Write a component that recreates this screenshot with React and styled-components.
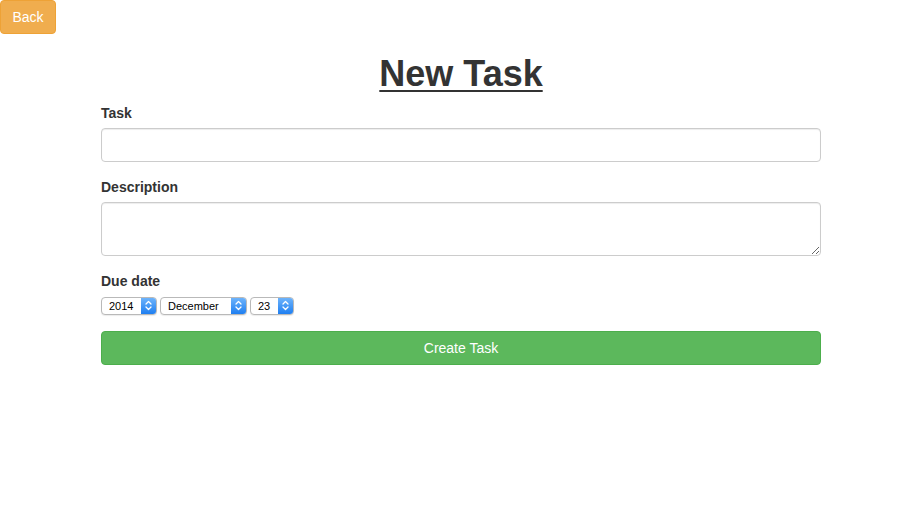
import React from 'react';
import styled, { createGlobalStyle } from 'styled-components';

const GlobalStyle = createGlobalStyle`
  body {
    margin: 0;
    background: #fff;
    font-family: "Liberation Sans", Arial, sans-serif;
    font-size: 14px;
    line-height: 1.42857;
    color: #333;
  }
  * { box-sizing: border-box; }
`;

const BackButton = styled.button`
  display: block;
  width: 56px;
  height: 34px;
  padding: 0;
  background-color: #f0ad4e;
  border: 1px solid #eea236;
  border-radius: 4px;
  color: #fff;
  font-family: inherit;
  font-size: 14px;
  cursor: pointer;
`;

const Page = styled.div`
  display: flex;
  justify-content: center;
  padding-left: 6px;
`;

const Container = styled.div`
  width: 720px;
`;

const Title = styled.h1`
  margin: 20px 0 9px;
  font-size: 36px;
  font-weight: bold;
  line-height: 1.1;
  text-align: center;
  text-decoration: underline;
  text-decoration-thickness: 2px;
  text-underline-offset: 4px;
  color: #333;
`;

const FormGroup = styled.div`
  margin-bottom: 15px;
`;

const Label = styled.label`
  display: block;
  margin-bottom: 5px;
  font-weight: bold;
  line-height: 20px;
`;

const TextInput = styled.input`
  display: block;
  width: 100%;
  height: 34px;
  padding: 6px 12px;
  border: 1px solid #ccc;
  border-radius: 4px;
  box-shadow: inset 0 1px 1px rgba(0, 0, 0, 0.075);
  font-family: inherit;
  font-size: 14px;
`;

const TextArea = styled.textarea`
  display: block;
  width: 100%;
  height: 54px;
  padding: 6px 12px;
  border: 1px solid #ccc;
  border-radius: 4px;
  box-shadow: inset 0 1px 1px rgba(0, 0, 0, 0.075);
  font-family: inherit;
  font-size: 14px;
  resize: vertical;
`;

const DateRow = styled.div`
  display: flex;
  gap: 3px;
  height: 20px;
  align-items: center;
`;

const SelectBox = styled.div`
  display: flex;
  align-items: stretch;
  width: ${p => p.$w}px;
  height: 18px;
  border: 1px solid #b9b9b9;
  border-radius: 4px;
  background: #fff;
  overflow: hidden;
  box-shadow: 0 1px 1px rgba(0, 0, 0, 0.08);
`;

const SelectText = styled.span`
  flex: 1;
  padding-left: 7px;
  font-size: 11px;
  line-height: 16px;
  color: #000;
`;

const Stepper = styled.span`
  width: 15px;
  display: flex;
  align-items: center;
  justify-content: center;
  background: linear-gradient(#6db3fb, #1f7ff1);
`;

const Select = ({ w, children }) => (
  <SelectBox $w={w}>
    <SelectText>{children}</SelectText>
    <Stepper>
      <svg width="7" height="11" viewBox="0 0 7 11" fill="none" stroke="#fff" strokeWidth="1.3" strokeLinecap="round" strokeLinejoin="round">
        <path d="M1 4 L3.5 1.5 L6 4" />
        <path d="M1 7 L3.5 9.5 L6 7" />
      </svg>
    </Stepper>
  </SelectBox>
);

const SubmitButton = styled.button`
  display: block;
  width: 100%;
  height: 34px;
  background-color: #5cb85c;
  border: 1px solid #4cae4c;
  border-radius: 4px;
  color: #fff;
  font-family: inherit;
  font-size: 14px;
  cursor: pointer;
`;

const App = () => {
  return (
    <>
      <GlobalStyle />
      <BackButton type="button">Back</BackButton>
      <Page>
        <Container>
          <Title>New Task</Title>
          <form onSubmit={e => e.preventDefault()}>
            <FormGroup>
              <Label>Task</Label>
              <TextInput type="text" />
            </FormGroup>
            <FormGroup>
              <Label>Description</Label>
              <TextArea rows="2" />
            </FormGroup>
            <FormGroup>
              <Label>Due date</Label>
              <DateRow>
                <Select w={56}>2014</Select>
                <Select w={87}>December</Select>
                <Select w={44}>23</Select>
              </DateRow>
            </FormGroup>
            <SubmitButton type="submit">Create Task</SubmitButton>
          </form>
        </Container>
      </Page>
    </>
  );
};

export default App;
